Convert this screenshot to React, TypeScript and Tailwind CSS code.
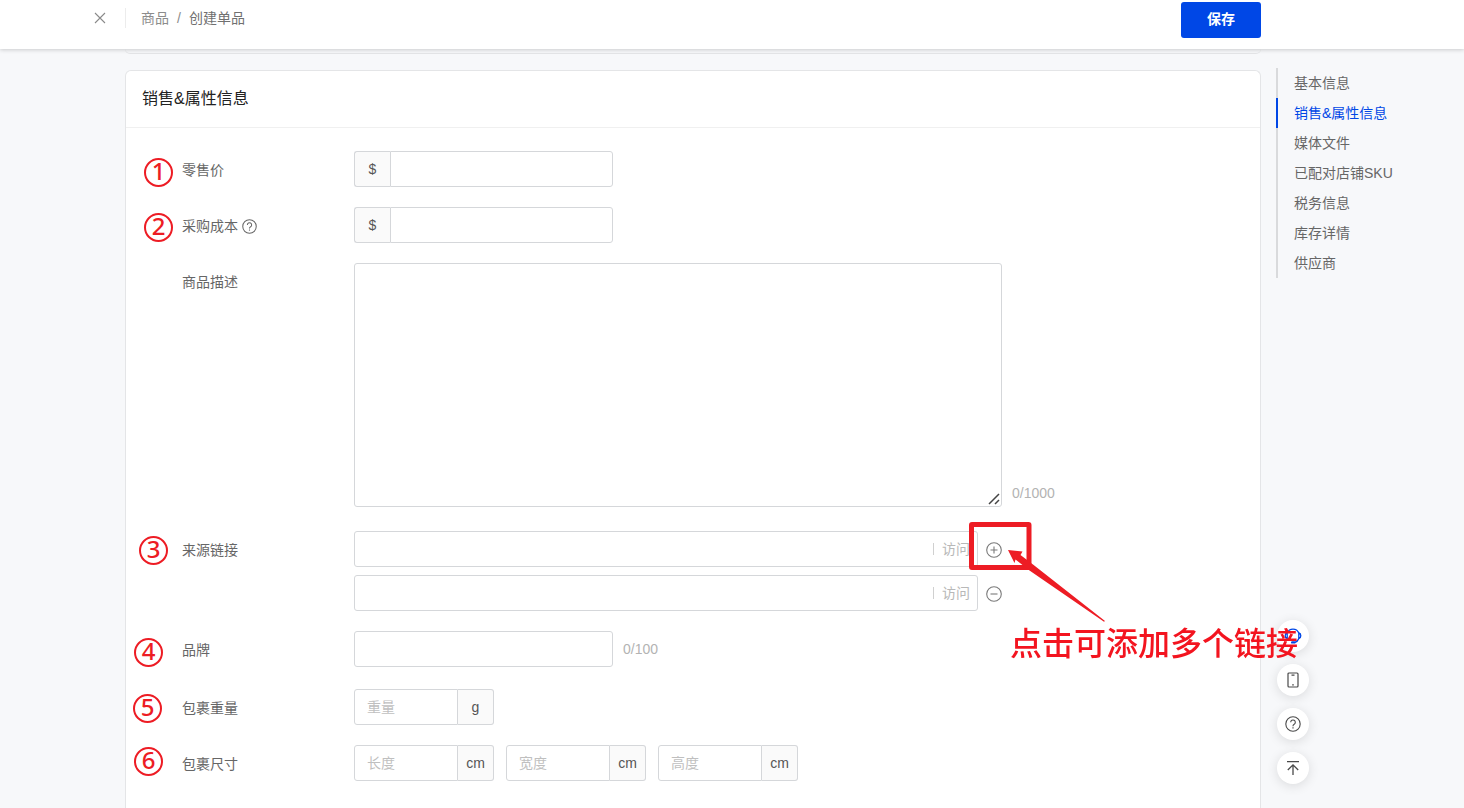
import type { ReactNode } from 'react';

const NAV_ITEMS = [
  '基本信息',
  '销售&属性信息',
  '媒体文件',
  '已配对店铺SKU',
  '税务信息',
  '库存详情',
  '供应商',
];

const ACTIVE_ITEM = '销售&属性信息';

const inputClass =
  'h-9 rounded-[3px] border border-[#d5d7da] bg-white px-3 text-sm text-[#333] placeholder:text-[#bfbfbf] focus:outline-none focus:border-[#0047e6]';

function HelpIcon({ className }: { className?: string }) {
  return (
    <svg viewBox="0 0 16 16" fill="none" stroke="currentColor" className={className}>
      <circle cx="8" cy="8" r="7.2" strokeWidth="1.1" />
      <path d="M5.7 6.3a2.3 2.3 0 1 1 3.5 2c-.8.5-1.2.8-1.2 1.600v.3" strokeWidth="1.1" />
      <path d="M8 11.200v1.200" strokeWidth="1.2" />
    </svg>
  );
}

interface RowProps {
  label: string;
  htmlFor: string;
  step?: string;
  stepClass?: string;
  help?: boolean;
  children: ReactNode;
}

function Row({ label, htmlFor, step, stepClass, help, children }: RowProps) {
  return (
    <div className="relative flex items-start pl-14">
      {step && (
        <span
          className={`absolute flex h-[29px] w-[29px] items-center justify-center rounded-full border-2 border-[#ed1c24] pb-[3px] font-['Noto_Sans','Noto_Sans_CJK_SC',sans-serif] text-2xl leading-none font-medium text-[#ed1c24] ${stepClass}`}
        >
          {step}
        </span>
      )}
      <div className="flex h-9 w-[172px] shrink-0 items-center gap-1 pt-0.5 text-[#666]">
        <label htmlFor={htmlFor}>{label}</label>
        {help && <HelpIcon className="h-[15px] w-[15px]" />}
      </div>
      {children}
    </div>
  );
}

function MoneyInput({ id }: { id: string }) {
  return (
    <div className="flex w-[259px]">
      <span className="flex h-9 w-9 items-center justify-center rounded-l-[3px] border border-r-0 border-[#d5d7da] bg-[#fafafa] text-[#555]">
        $
      </span>
      <input id={id} type="text" className={`${inputClass} min-w-0 flex-1 rounded-l-none`} />
    </div>
  );
}

function UnitInput({ id, placeholder, unit }: { id: string; placeholder: string; unit: string }) {
  return (
    <div className="flex w-[140px]">
      <input
        id={id}
        type="text"
        placeholder={placeholder}
        aria-label={placeholder}
        className={`${inputClass} min-w-0 flex-1 rounded-r-none`}
      />
      <span className="flex h-9 w-9 items-center justify-center rounded-r-[3px] border border-l-0 border-[#d5d7da] bg-[#fafafa] text-[#555]">
        {unit}
      </span>
    </div>
  );
}

function LinkInput({ id, action }: { id: string; action: 'add' | 'remove' }) {
  return (
    <div className="flex items-center gap-2">
      <div className="relative w-[624px]">
        <input id={id} type="text" aria-label="来源链接" className={`${inputClass} w-full pr-14`} />
        <div className="absolute inset-y-0 right-2 flex items-center gap-2">
          <span className="h-3 w-px bg-[#d0d0d0]" />
          <button type="button" className="text-[#b8b8b8]">访问</button>
        </div>
      </div>
      <button type="button" aria-label={action === 'add' ? '添加' : '删除'} className="pt-0.5 text-[#7a7a7a]">
        <svg viewBox="0 0 16 16" fill="none" stroke="currentColor" className="h-4 w-4">
          <circle cx="8" cy="8" r="7.3" strokeWidth="1.1" />
          <path d={action === 'add' ? 'M4.5 8h7M8 4.5v7' : 'M4.5 8h7'} strokeWidth="1.1" />
        </svg>
      </button>
    </div>
  );
}

// Red frame, arrow and note that point at the add button
function AddLinkNote() {
  return (
    <div className="pointer-events-none absolute -top-[9px] left-[615px] z-20 text-[#f3141f]">
      <svg width="140" height="102" viewBox="0 0 140 102" fill="#ed1c24">
        <rect x="2.5" y="2.5" width="57.5" height="43" rx="0.5" fill="none" stroke="#ed1c24" strokeWidth="5" strokeLinejoin="round" />
        <path d="M39 28l14.500 1.500-2 3.500 12.500 9.500L136 99l-1 .8L60.500 48.500 46.500 37.500 45.500 41z" />
      </svg>
      <p className="ml-[41px] whitespace-nowrap text-[32px] leading-10 font-medium">点击可添加多个链接</p>
    </div>
  );
}

function FloatButton({ label, children }: { label: string; children: ReactNode }) {
  return (
    <button
      type="button"
      aria-label={label}
      className="flex h-8 w-8 items-center justify-center rounded-full bg-white text-[#4a4a4a] shadow-[0_2px_12px_rgba(0,0,0,0.12)]"
    >
      {children}
    </button>
  );
}

export default function App() {
  return (
    <div className="flex min-h-screen flex-col bg-[#f7f8fa] font-['Liberation_Sans','Noto_Sans_CJK_SC',sans-serif] text-sm">
      {/* Top bar */}
      <header className="relative z-10 flex items-start bg-white pt-0.5 pr-[203px] pb-[11px] pl-[94px] shadow-[0_1px_4px_rgba(0,0,0,0.18)]">
        <div className="flex h-8 items-center">
          <button type="button" aria-label="关闭" className="text-[#8a8a8a]">
            <svg viewBox="0 0 12 12" fill="none" stroke="currentColor" className="h-3 w-3">
              <path d="M1 1l10 10M11 1L1 11" strokeWidth="1.1" />
            </svg>
          </button>
          <span className="ml-[19px] h-5 w-px bg-[#ececec]" />
          <nav className="ml-[15px] flex gap-2 text-[#707070]">
            <a href="#" className="text-[#8c8c8c]">商品</a>
            <span className="text-[#8c8c8c]">/</span>
            <span>创建单品</span>
          </nav>
        </div>
        <button type="button" className="ml-auto h-9 w-20 rounded-[3px] bg-[#0047e6] pb-0.5 font-bold text-white">
          保存
        </button>
      </header>

      <div className="flex flex-1 pl-[125px]">
        <main className="flex flex-1 flex-col">
          {/* Bottom edge of the section scrolled under the top bar */}
          <div className="h-[5px] rounded-b-md border-b border-[#e4e5e7]" />

          <section className="mt-4 flex-1 rounded-t-md border border-b-0 border-[#e4e5e7] bg-white">
            <h2 className="border-b border-[#f0f0f0] px-4 text-base leading-14 text-[#222]">销售&amp;属性信息</h2>

            <form className="flex flex-col gap-5 pt-[23px] pb-[27px]">
              <Row label="零售价" htmlFor="retail" step="1" stepClass="top-[7px] left-[18px]">
                <MoneyInput id="retail" />
              </Row>
              <Row label="采购成本" htmlFor="cost" step="2" stepClass="top-1.5 left-[18px]" help>
                <MoneyInput id="cost" />
              </Row>
              <Row label="商品描述" htmlFor="description">
                <div className="mb-1 flex items-end gap-[10px]">
                  <div className="relative flex">
                    <textarea
                      id="description"
                      className="h-[244px] w-[648px] resize-none rounded-[3px] border border-[#d5d7da] bg-white p-3 focus:outline-none"
                    />
                    <svg viewBox="0 0 12 12" fill="none" stroke="#444" className="absolute right-0.5 bottom-0.5 h-3 w-3">
                      <path d="M1 11L11 1M7 11l4-4" strokeWidth="1.5" />
                    </svg>
                  </div>
                  <span className="pb-1 text-[#b3b3b3]">0/1000</span>
                </div>
              </Row>
              <Row label="来源链接" htmlFor="link-1" step="3" stepClass="top-[5px] left-[13px]">
                <div className="relative flex flex-col gap-2">
                  <LinkInput id="link-1" action="add" />
                  <LinkInput id="link-2" action="remove" />
                  <AddLinkNote />
                </div>
              </Row>
              <Row label="品牌" htmlFor="brand" step="4" stepClass="top-[7px] left-2">
                <div className="flex items-center gap-[10px]">
                  <input id="brand" type="text" className={`${inputClass} w-[259px]`} />
                  <span className="text-[#b3b3b3]">0/100</span>
                </div>
              </Row>
              <div className="flex flex-col gap-5 pt-0.5">
                <Row label="包裹重量" htmlFor="weight" step="5" stepClass="top-[5px] left-[7px]">
                  <UnitInput id="weight" placeholder="重量" unit="g" />
                </Row>
                <Row label="包裹尺寸" htmlFor="length" step="6" stepClass="top-0.5 left-2">
                  <div className="flex gap-3">
                    <UnitInput id="length" placeholder="长度" unit="cm" />
                    <UnitInput id="width" placeholder="宽度" unit="cm" />
                    <UnitInput id="height" placeholder="高度" unit="cm" />
                  </div>
                </Row>
              </div>
            </form>
          </section>
        </main>

        {/* Section anchors */}
        <aside className="ml-[15px] w-[188px] shrink-0 pt-[19px]">
          <ul>
            {NAV_ITEMS.map((item) => (
              <li key={item}>
                <a
                  href="#"
                  className={`block border-l-2 pl-4 leading-[30px] ${
                    item === ACTIVE_ITEM ? 'border-[#0047e6] text-[#0047e6]' : 'border-[#d9dadc] text-[#666]'
                  }`}
                >
                  {item}
                </a>
              </li>
            ))}
          </ul>
        </aside>
      </div>

      {/* Floating tools */}
      <div className="fixed right-[155px] bottom-6 z-10 flex flex-col gap-3">
        <FloatButton label="客服">
          <svg viewBox="0 0 18 18" fill="none" stroke="#0047e6" className="h-[18px] w-[18px]">
            <path d="M3.200 6A6.300 6.300 0 0 1 14.800 6M14.800 11.500c-.7 2-1.800 3.300-3.800 3.800" strokeWidth="1.300" />
            <path d="M3.200 6C1.800 6.300 1.200 7.200 1.200 8.700s.6 2.500 2 2.800zM14.800 6c1.400.3 2 1.200 2 2.700s-.6 2.500-2 2.800z" strokeWidth="1.300" />
            <rect x="7" y="14.200" width="4.500" height="2.400" rx="1.200" fill="#0047e6" stroke="none" />
          </svg>
        </FloatButton>
        <FloatButton label="手机端">
          <svg viewBox="0 0 16 16" fill="none" stroke="currentColor" className="h-4 w-4">
            <rect x="3" y="1" width="10" height="14" rx="1" strokeWidth="1.2" />
            <path d="M6.500 3.200h3M7.200 12.800h1.600" strokeWidth="1.200" />
          </svg>
        </FloatButton>
        <FloatButton label="帮助">
          <HelpIcon className="h-4 w-4" />
        </FloatButton>
        <FloatButton label="回到顶部">
          <svg viewBox="0 0 16 16" fill="none" stroke="currentColor" className="h-4 w-4">
            <path d="M2 1.700h12M8 15V5M2.800 10L8 4.800l5.200 5.200" strokeWidth="1.300" />
          </svg>
        </FloatButton>
      </div>
    </div>
  );
}
